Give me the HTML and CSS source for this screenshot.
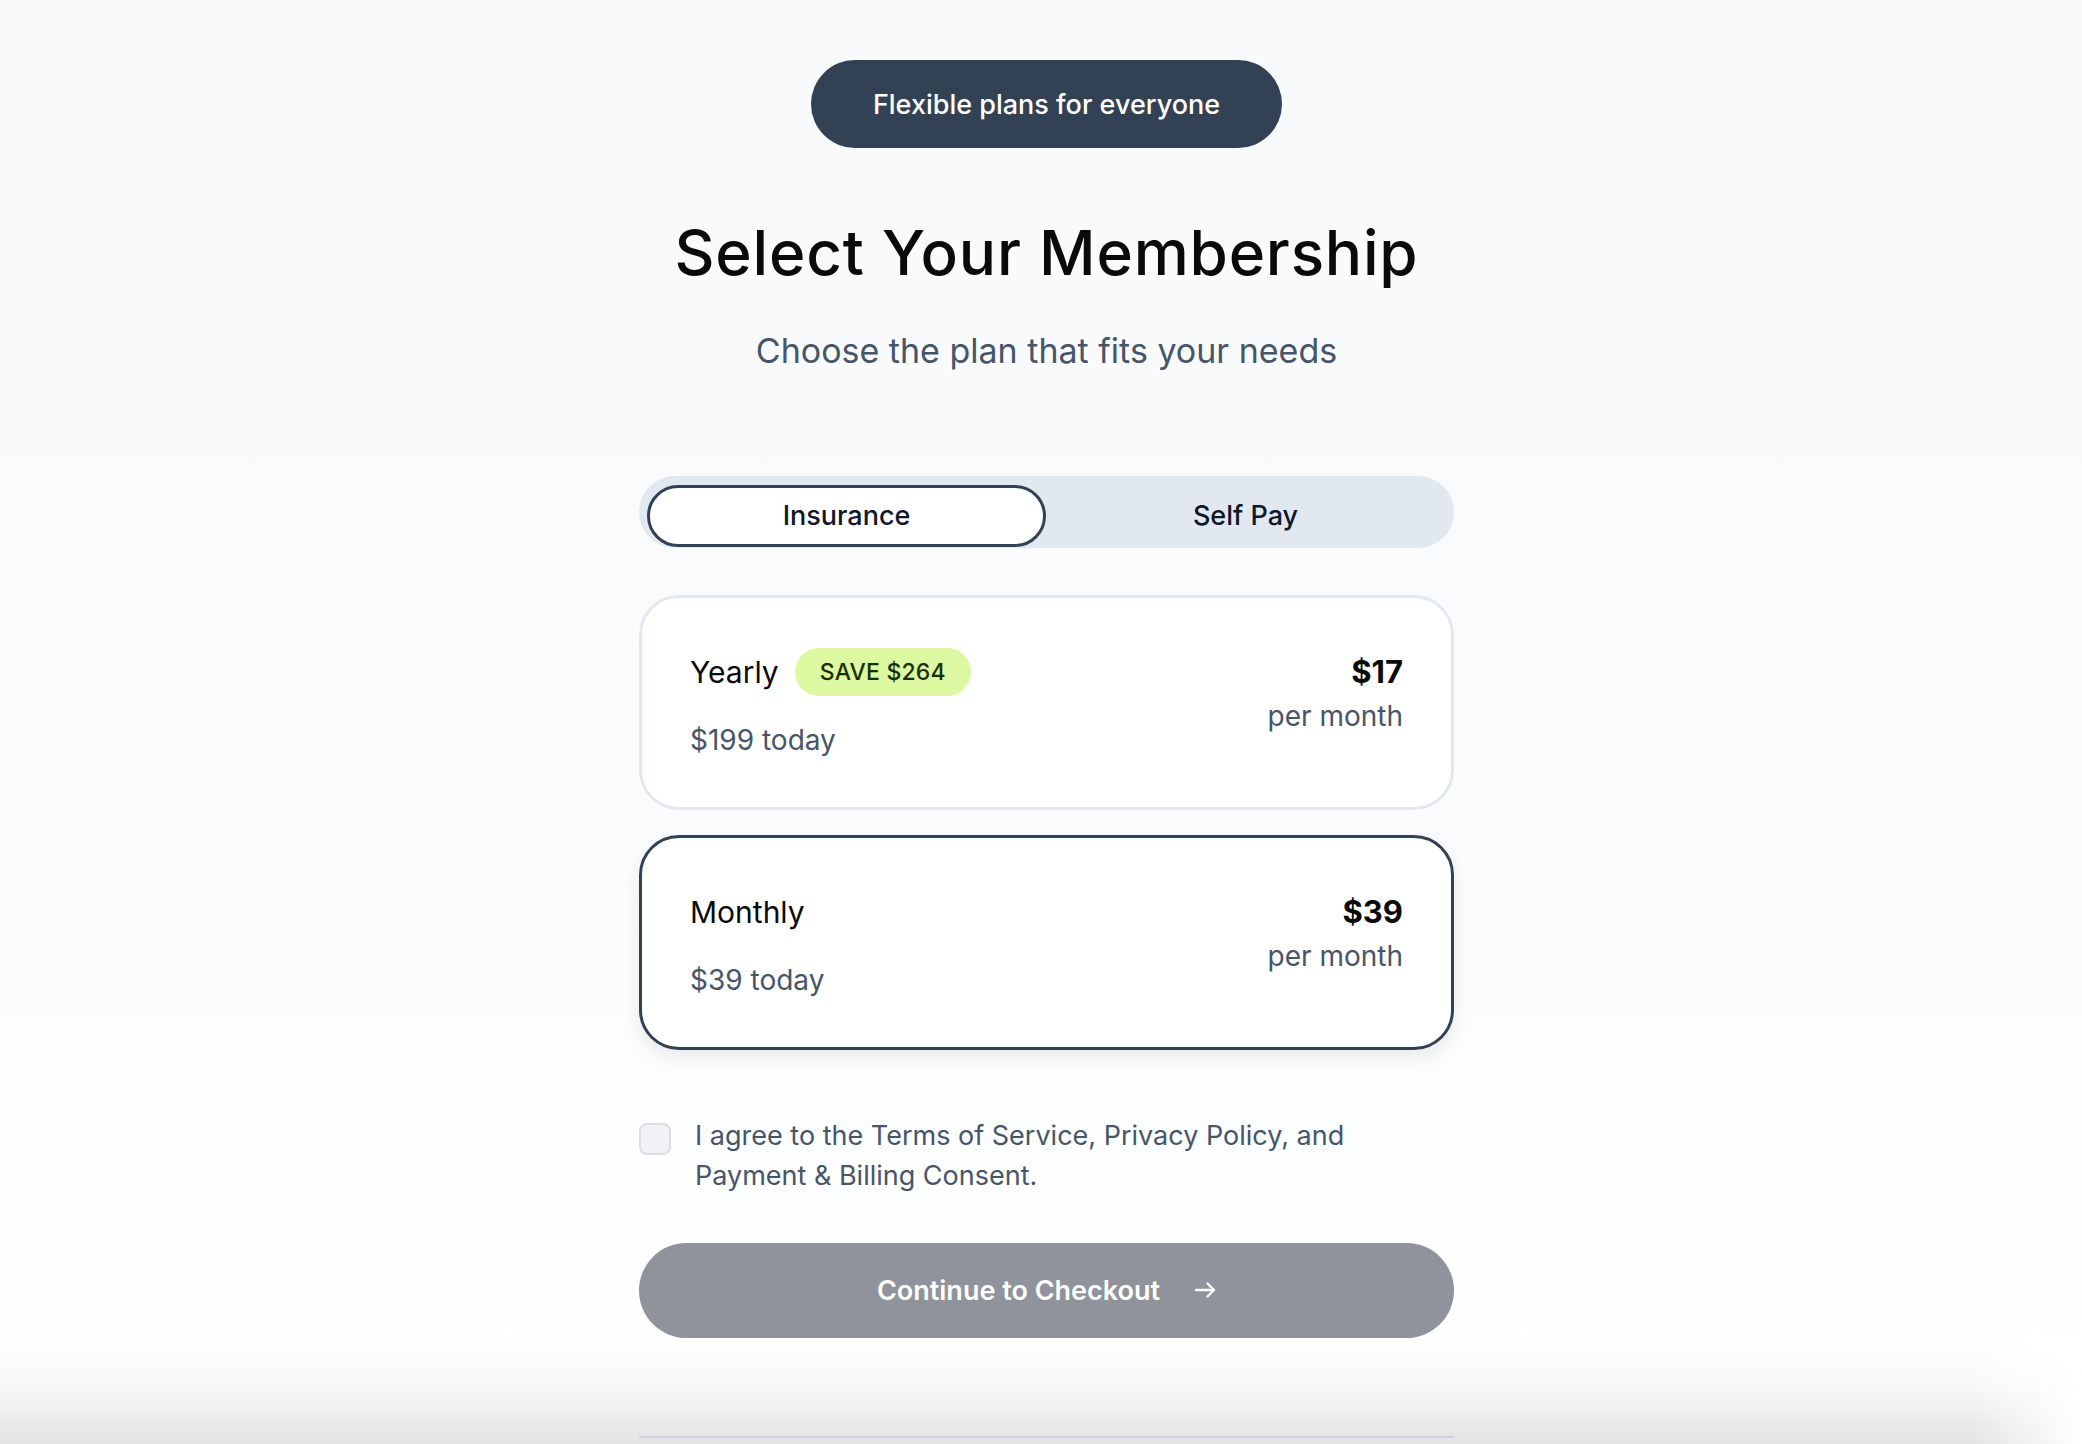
FILE: index.html
```html
<!DOCTYPE html>
<html lang="en">
<head>
<meta charset="utf-8">
<title>Select Your Membership</title>
<link rel="stylesheet" href="styles.css">
</head>
<body>
<main class="page">
  <div class="wrap">
    <div class="tag">Flexible plans for everyone</div>
    <h1 class="title">Select Your Membership</h1>
    <p class="subtitle">Choose the plan that fits your needs</p>

    <div class="toggle">
      <button class="toggle-opt active">Insurance</button>
      <button class="toggle-opt">Self Pay</button>
    </div>

    <div class="plans">
      <div class="plan">
        <div class="plan-left">
          <div class="plan-head">
            <span class="plan-name">Yearly</span>
            <span class="badge">SAVE $264</span>
          </div>
          <div class="plan-today">$199 today</div>
        </div>
        <div class="plan-right">
          <div class="plan-price">$17</div>
          <div class="plan-per">per month</div>
        </div>
      </div>
      <div class="plan selected">
        <div class="plan-left">
          <div class="plan-head">
            <span class="plan-name">Monthly</span>
          </div>
          <div class="plan-today">$39 today</div>
        </div>
        <div class="plan-right">
          <div class="plan-price">$39</div>
          <div class="plan-per">per month</div>
        </div>
      </div>
    </div>

    <label class="agree">
      <span class="checkbox"></span>
      <span class="agree-text">I agree to the Terms of Service, Privacy Policy, and Payment &amp; Billing Consent.</span>
    </label>

    <button class="cta">
      <span>Continue to Checkout</span>
      <svg class="cta-arrow" width="22" height="22" viewBox="0 0 22 22" fill="none" stroke="#ffffff" stroke-width="2.4" stroke-linecap="round" stroke-linejoin="round"><path d="M2 11h18"/><path d="M13.5 4.5l6.5 6.5-6.5 6.5"/></svg>
    </button>
  </div>
  <div class="bottom-fade"><div class="bottom-line"></div></div>
</main>
</body>
</html>
```

FILE: styles.css
```css
* { box-sizing: border-box; }

html, body {
  margin: 0;
  padding: 0;
}

body {
  font-family: Inter, "Noto Sans", "Liberation Sans", sans-serif;
  background: linear-gradient(180deg, #f8fafc 0%, #f9fbfc 55%, #ffffff 100%);
  min-height: 1444px;
  color: #0f172a;
}

.page {
  min-height: 1444px;
  padding-left: 11px;
}

.wrap {
  width: 815px;
  margin: 0 auto;
  padding-top: 60px;
  display: flex;
  flex-direction: column;
  align-items: center;
}

.tag {
  height: 88px;
  padding: 0 62px;
  border-radius: 999px;
  background: #334155;
  color: #ffffff;
  font-size: 27px;
  font-weight: 500;
  display: flex;
  align-items: center;
  justify-content: center;
}

.title {
  margin: 68px 0 0;
  font-size: 62px;
  font-weight: 500;
  line-height: 1.2;
  color: #0a0a0a;
  letter-spacing: 0.8px;
}

.subtitle {
  margin: 37px 0 0;
  font-size: 34px;
  line-height: 1.4;
  color: #475569;
}

.toggle {
  margin-top: 101px;
  width: 100%;
  height: 72px;
  background: #e2e8f0;
  border-radius: 999px;
  padding: 9px 9px 1px 8px;
  display: grid;
  grid-template-columns: 1fr 1fr;
}

.toggle-opt {
  border: 3px solid transparent;
  border-radius: 999px;
  background: transparent;
  font-family: inherit;
  font-size: 27px;
  font-weight: 500;
  color: #0f172a;
  padding: 0;
  display: flex;
  align-items: center;
  justify-content: center;
}

.toggle-opt.active {
  background: #ffffff;
  border-color: #334155;
}

.plans {
  margin-top: 47px;
  width: 100%;
  display: flex;
  flex-direction: column;
  gap: 25px;
}

.plan {
  height: 215px;
  background: #ffffff;
  border: 3px solid #e2e8f0;
  border-radius: 40px;
  padding: 50px 48px 0 48px;
  display: flex;
  justify-content: space-between;
  align-items: flex-start;
}

.plan.selected {
  border-color: #334155;
  box-shadow: 0 8px 18px rgba(15, 23, 42, 0.08);
}

.plan-head {
  height: 48px;
  display: flex;
  align-items: center;
  gap: 16px;
}

.plan-name {
  font-size: 30px;
  line-height: 36px;
  color: #0a0a0a;
}

.badge {
  height: 48px;
  padding: 0 25px;
  border-radius: 999px;
  background: #dcf8a0;
  color: #1a2e05;
  font-size: 23px;
  font-weight: 500;
  display: flex;
  align-items: center;
  letter-spacing: 0.2px;
}

.plan-today {
  margin-top: 25px;
  font-size: 28px;
  line-height: 38px;
  color: #475569;
}

.plan-right {
  text-align: right;
}

.plan-price {
  font-size: 31px;
  line-height: 48px;
  font-weight: 700;
  color: #0a0a0a;
}

.plan-per {
  margin-top: 3px;
  font-size: 28px;
  line-height: 34px;
  color: #475569;
}

.agree {
  margin-top: 66px;
  width: 100%;
  display: flex;
  align-items: flex-start;
  gap: 24px;
}

.checkbox {
  flex: none;
  width: 32px;
  height: 32px;
  margin-top: 7px;
  border: 2px solid #dcdde0;
  border-radius: 8px;
  background: #f1f2f5;
}

.agree-text {
  font-size: 27px;
  line-height: 40px;
  color: #475569;
}

.cta {
  margin-top: 47px;
  width: 100%;
  height: 95px;
  border: none;
  border-radius: 999px;
  background: #8f939c;
  color: #ffffff;
  font-family: inherit;
  font-size: 27px;
  font-weight: 600;
  display: flex;
  align-items: center;
  justify-content: center;
  gap: 34px;
}

.cta-arrow {
  flex: none;
}

.bottom-fade {
  position: fixed;
  left: 0;
  right: 0;
  bottom: 0;
  height: 104px;
  background:
    linear-gradient(270deg, #ffffff 0px, rgba(255, 255, 255, 0) 110px),
    linear-gradient(180deg, rgba(252, 253, 253, 0) 0%, rgba(246, 246, 246, 0.8) 45%, #e3e3e3 100%);
  display: flex;
  justify-content: center;
  padding-left: 11px;
  pointer-events: none;
}

.bottom-line {
  width: 815px;
  height: 2px;
  margin-top: 96px;
  background: #cbd2dc;
}
```
